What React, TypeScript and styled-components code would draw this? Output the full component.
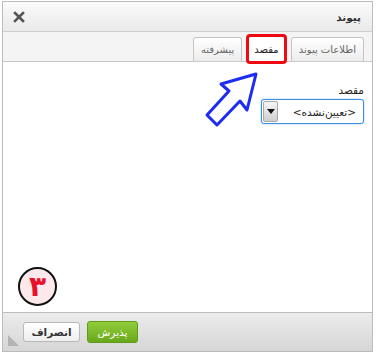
import React from 'react';
import styled, { createGlobalStyle } from 'styled-components';

const Global = createGlobalStyle`
  html, body {
    margin: 0;
    padding: 0;
    background: #ffffff;
  }
  body {
    font-family: "DejaVu Sans", "Noto Sans", sans-serif;
  }
`;

const Page = styled.div`
  position: relative;
  width: 376px;
  height: 354px;
  overflow: hidden;
`;

const Dialog = styled.div`
  position: relative;
  margin: 1px 0 0 2px;
  width: 371px;
  height: 351px;
  border: 1px solid #bcbcbc;
  display: flex;
  flex-direction: column;
  direction: rtl;
  box-sizing: border-box;
  background: #fff;
`;

const TitleBar = styled.div`
  height: 29px;
  flex: none;
  display: flex;
  align-items: center;
  justify-content: space-between;
  padding: 0 11px 0 10px;
  background: linear-gradient(#fbfbfb, #e9e9e9);
  border-bottom: 1px solid #cfcfcf;
`;

const Title = styled.span`
  font-size: 10.5px;
  font-weight: bold;
  color: #333;
`;

const Close = styled.span`
  width: 12px;
  height: 12px;
  display: flex;
`;

const TabStrip = styled.div`
  height: 30px;
  flex: none;
  display: flex;
  align-items: flex-end;
  gap: 6px;
  padding: 0 8px;
  background: #f4f4f4;
  border-bottom: 1px solid #c9c9c9;
  box-sizing: border-box;
`;

const Tab = styled.div<{ $active?: boolean }>`
  position: relative;
  height: ${p => (p.$active ? '26px' : '24px')};
  margin-bottom: ${p => (p.$active ? '-1px' : '0')};
  padding: 0 ${p => (p.$active ? '5px' : '7px')};
  display: flex;
  align-items: center;
  font-size: 10px;
  color: ${p => (p.$active ? '#222' : '#666')};
  background: ${p => (p.$active ? '#ffffff' : 'linear-gradient(#ffffff, #ececec)')};
  border: 1px solid #c5c5c5;
  border-bottom: ${p => (p.$active ? '1px solid #fff' : 'none')};
  border-radius: 3px 3px 0 0;
  box-sizing: border-box;
`;

const Highlight = styled.span`
  position: absolute;
  left: -3px;
  right: -3px;
  top: -3px;
  bottom: -3px;
  border: 3px solid #ee0a12;
  border-radius: 4px;
`;

const Content = styled.div`
  flex: 1;
  padding: 22px 8px 0;
  display: flex;
  flex-direction: column;
  align-items: flex-start;
  gap: 3px;
`;

const Label = styled.label`
  font-size: 10.5px;
  color: #222;
`;

const Select = styled.div`
  width: 103px;
  height: 25px;
  box-sizing: border-box;
  border: 1px solid #3d8ee0;
  border-radius: 3px;
  box-shadow: 0 0 2px #8fc1f2;
  display: flex;
  align-items: center;
  justify-content: space-between;
  padding: 0 7px 0 1px;
  background: #fff;
`;

const SelectText = styled.span`
  font-size: 10.5px;
  color: #222;
`;

const DropButton = styled.span`
  width: 15px;
  height: 21px;
  box-sizing: border-box;
  border: 1px solid #a9a9a9;
  border-radius: 2px;
  background: linear-gradient(#f6f6f6, #cfcfcf);
  display: flex;
  align-items: center;
  justify-content: center;
  &::after {
    content: '';
    border-left: 4px solid transparent;
    border-right: 4px solid transparent;
    border-top: 5px solid #111;
  }
`;

const Footer = styled.div`
  position: relative;
  height: 38px;
  flex: none;
  display: flex;
  align-items: center;
  justify-content: flex-end;
  gap: 7px;
  padding: 0 20px;
  background: linear-gradient(#ebebeb, #d6d6d6);
  border-top: 1px solid #bdbdbd;
`;

const Button = styled.button<{ $primary?: boolean }>`
  height: ${p => (p.$primary ? '22px' : '20px')};
  padding: 0;
  width: ${p => (p.$primary ? '51px' : '57px')};
  font-family: "DejaVu Sans", "Noto Sans", sans-serif;
  font-size: 10.5px;
  font-weight: ${p => (p.$primary ? 'normal' : 'bold')};
  color: ${p => (p.$primary ? '#ffffff' : '#333')};
  background: ${p =>
    p.$primary ? 'linear-gradient(#92cc3c, #69a81b)' : 'linear-gradient(#ffffff, #eeeeee)'};
  border: 1px solid ${p => (p.$primary ? '#5f9d18' : '#b8b8b8')};
  border-radius: 3px;
`;

const Grip = styled.span`
  position: absolute;
  left: 5px;
  bottom: 5px;
  width: 0;
  height: 0;
  border-right: 11px solid transparent;
  border-bottom: 11px solid #b3b3b3;
`;

const Badge = styled.div`
  position: absolute;
  left: 18px;
  top: 267px;
  width: 39px;
  height: 39px;
  box-sizing: border-box;
  border-radius: 50%;
  border: 2px solid #111;
  background: #fde9ec;
  display: flex;
  align-items: center;
  justify-content: center;
  color: #e8102a;
  font-size: 28px;
  font-weight: bold;
  line-height: 1;
`;

const Arrow = styled.svg`
  position: absolute;
  left: 200px;
  top: 68px;
`;

export default function App() {
  return (
    <Page>
      <Global />
      <Dialog>
        <TitleBar>
          <Title>پیوند</Title>
          <Close>
            <svg width="12" height="12" viewBox="0 0 12 12">
              <path d="M2 2 L10 10 M10 2 L2 10" stroke="#555" strokeWidth="2.6" strokeLinecap="square" />
            </svg>
          </Close>
        </TitleBar>
        <TabStrip>
          <Tab>اطلاعات پیوند</Tab>
          <Tab $active>
            مقصد
            <Highlight />
          </Tab>
          <Tab>پیشرفته</Tab>
        </TabStrip>
        <Content>
          <Label>مقصد</Label>
          <Select>
            <SelectText>&lt;تعیین‌نشده&gt;</SelectText>
            <DropButton />
          </Select>
        </Content>
        <Footer>
          <Button $primary>پذیرش</Button>
          <Button>انصراف</Button>
          <Grip />
        </Footer>
      </Dialog>
      <Arrow width="70" height="62" viewBox="0 0 70 62">
        <polygon
          points="56,6 21,16 29,23 7,47 17,57 40,33 47,42"
          fill="#fff"
          stroke="#1c2cf0"
          strokeWidth="3"
          strokeLinejoin="round"
        />
      </Arrow>
      <Badge>۳</Badge>
    </Page>
  );
}
